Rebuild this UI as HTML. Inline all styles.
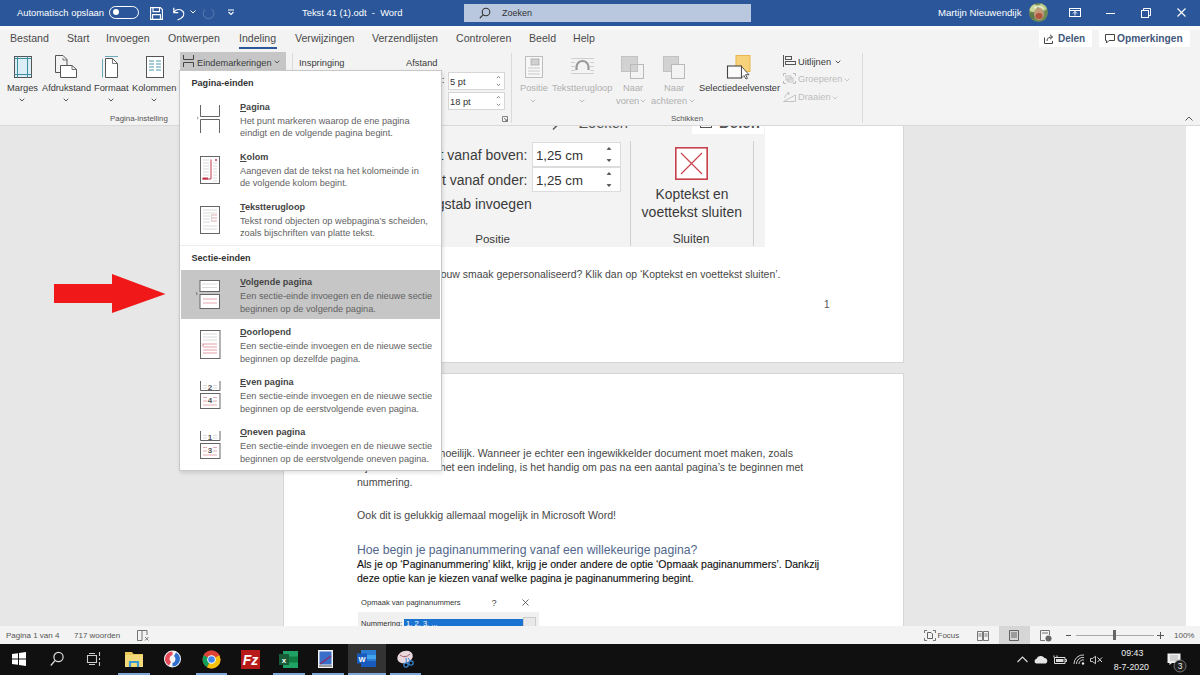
<!DOCTYPE html>
<html><head><meta charset="utf-8">
<style>
*{margin:0;padding:0;box-sizing:border-box}
html,body{width:1200px;height:675px;overflow:hidden;background:#e7e7e7;font-family:"Liberation Sans",sans-serif;color:#333}
.a{position:absolute}
.t{position:absolute;white-space:nowrap;line-height:1}
svg{position:absolute;overflow:visible}
</style></head><body>
<div class="a" style="left:0;top:0;width:1200px;height:26px;background:#2b579a">
<div class="t" style="left:17.00px;top:8px;font-size:9.4px;color:#fff;">Automatisch opslaan</div>
<div class="a" style="left:109px;top:6px;width:30px;height:13px;border:1.2px solid #fff;border-radius:7px"></div>
<div class="a" style="left:113px;top:9px;width:6px;height:6px;background:#fff;border-radius:50%"></div>
<svg style="left:150px;top:7px;" width="13" height="13" viewBox="0 0 13 13"><path d="M0.6 0.6H10.4L12.4 2.6V12.4H0.6Z M3 0.6V4.6H9.5V0.6 M2.6 12.4V7.6H10.4V12.4" fill="none" stroke="#fff" stroke-width="1.1"/></svg>
<svg style="left:172px;top:7px;" width="14" height="14" viewBox="0 0 14 14"><path d="M1.8 5.2C4 2 8.5 1.5 11 4.5C13 7 12 10.5 5.5 13" fill="none" stroke="#fff" stroke-width="1.2"/><path d="M1.8 0.8V5.6H6.3" fill="none" stroke="#fff" stroke-width="1.2"/></svg>
<svg style="left:190px;top:10px;" width="6" height="4" viewBox="0 0 6 4"><path d="M0.5 0.5L3 3L5.5 0.5" fill="none" stroke="#fff" stroke-width="1"/></svg>
<svg style="left:202px;top:7px;" width="13" height="13" viewBox="0 0 13 13"><path d="M3 2.5A5.3 5.3 0 1 0 9.5 2" fill="none" stroke="#4e72ad" stroke-width="1.2"/></svg>
<svg style="left:227px;top:9px;" width="8" height="8" viewBox="0 0 8 8"><path d="M1 1H7 M1.5 3L4 5.5L6.5 3" fill="none" stroke="#fff" stroke-width="1.1"/></svg>
<div class="t" style="left:302.00px;top:8px;font-size:9.4px;color:#fff;">Tekst 41 (1).odt&nbsp; - &nbsp;Word</div>
<div class="a" style="left:464px;top:4px;width:287px;height:17.5px;background:#b9c7df"></div>
<svg style="left:479px;top:7px;" width="12" height="12" viewBox="0 0 12 12"><circle cx="7" cy="5" r="3.8" fill="none" stroke="#333" stroke-width="1.1"/><path d="M4.3 7.7L0.8 11.2" stroke="#333" stroke-width="1.2"/></svg>
<div class="t" style="left:502.00px;top:9px;font-size:9px;color:#333;">Zoeken</div>
<div class="t" style="left:938.00px;top:8px;font-size:9.65px;color:#fff;">Martijn Nieuwendijk</div>
<svg style="left:1029px;top:3px;" width="19" height="19" viewBox="0 0 19 19"><defs><clipPath id="av"><circle cx="9.5" cy="9.5" r="9.5"/></clipPath></defs><g clip-path="url(#av)"><rect width="19" height="19" fill="#6f8a55"/><circle cx="4" cy="5" r="4" fill="#c9d79a"/><circle cx="14" cy="4" r="4" fill="#b6c98a"/><circle cx="3" cy="13" r="3" fill="#5e7a4a"/><ellipse cx="10" cy="11" rx="5" ry="6" fill="#c49a7a"/><ellipse cx="10" cy="13" rx="3.5" ry="3" fill="#b0553f"/><path d="M5 5Q10 1 15 6" fill="none" stroke="#e8e8c8" stroke-width="2"/></g></svg>
<svg style="left:1069px;top:8px;" width="12" height="9" viewBox="0 0 12 9"><rect x="0.5" y="0.5" width="11" height="8" fill="none" stroke="#fff" stroke-width="1"/><path d="M0.5 2.5H11.5 M6 3.5V7.5 M4 5.5L6 3.5L8 5.5" fill="none" stroke="#fff" stroke-width="1"/></svg>
<div class="a" style="left:1106px;top:13px;width:9px;height:1px;background:#fff"></div>
<svg style="left:1141px;top:8px;" width="10" height="10" viewBox="0 0 10 10"><rect x="0.5" y="2.5" width="7" height="7" fill="none" stroke="#fff" stroke-width="1"/><path d="M2.5 2.5V0.5H9.5V7.5H7.5" fill="none" stroke="#fff" stroke-width="1"/></svg>
<svg style="left:1177px;top:8px;" width="9" height="9" viewBox="0 0 9 9"><path d="M0.5 0.5L8.5 8.5M8.5 0.5L0.5 8.5" stroke="#fff" stroke-width="1.1"/></svg>
</div>
<div class="a" style="left:0;top:26px;width:1200px;height:24px;background:linear-gradient(#fafafa 0,#fafafa 3px,#f3f3f3 5px)">
<div class="t" style="left:10.00px;top:7px;font-size:10.6px;color:#4a4a4a;">Bestand</div>
<div class="t" style="left:67.00px;top:7px;font-size:10.6px;color:#4a4a4a;">Start</div>
<div class="t" style="left:106.00px;top:7px;font-size:10.6px;color:#4a4a4a;">Invoegen</div>
<div class="t" style="left:168.00px;top:7px;font-size:10.6px;color:#4a4a4a;">Ontwerpen</div>
<div class="t" style="left:239.00px;top:7px;font-size:10.6px;color:#4a4a4a;">Indeling</div>
<div class="t" style="left:295.00px;top:7px;font-size:10.6px;color:#4a4a4a;">Verwijzingen</div>
<div class="t" style="left:372.00px;top:7px;font-size:10.6px;color:#4a4a4a;">Verzendlijsten</div>
<div class="t" style="left:456.00px;top:7px;font-size:10.6px;color:#4a4a4a;">Controleren</div>
<div class="t" style="left:529.00px;top:7px;font-size:10.6px;color:#4a4a4a;">Beeld</div>
<div class="t" style="left:573.00px;top:7px;font-size:10.6px;color:#4a4a4a;">Help</div>
<div class="a" style="left:239px;top:21px;width:38px;height:2px;background:#2b579a"></div>
<div class="a" style="left:1039px;top:4px;width:53px;height:17px;background:#fff"></div>
<svg style="left:1044px;top:8px;" width="11" height="10" viewBox="0 0 11 10"><path d="M0.5 3.5V9.5H8.5V7 M3 7C3 4 5 3 8 3 M6 0.8L8.7 3L6 5.2" fill="none" stroke="#444" stroke-width="1"/></svg>
<div class="t" style="left:1058.00px;top:8px;font-size:10px;color:#43587a;font-weight:bold">Delen</div>
<div class="a" style="left:1099px;top:4px;width:91px;height:17px;background:#fff"></div>
<svg style="left:1105px;top:8px;" width="10" height="10" viewBox="0 0 10 10"><path d="M0.5 0.5H9.5V6.5H4L1.5 9V6.5H0.5Z" fill="none" stroke="#444" stroke-width="1"/></svg>
<div class="t" style="left:1117.00px;top:8px;font-size:10.2px;color:#43587a;font-weight:bold">Opmerkingen</div>
</div>
<div class="a" style="left:0;top:50px;width:1200px;height:76px;background:#f3f3f3">
<div class="a" style="left:0px;top:75px;width:1200px;height:1px;background:#d8d8d8"></div>
<svg style="left:14px;top:6px;" width="18" height="22" viewBox="0 0 18 22"><rect x="0.5" y="0.5" width="17" height="21" fill="#dbeef5" stroke="#555" stroke-width="1"/><path d="M3.5 0.5V21.5 M13.5 0.5V21.5 M0.5 2.5H17.5 M0.5 18.5H17.5" stroke="#3c8ea0" stroke-width="1"/></svg>
<div class="t" style="left:7.00px;top:34px;font-size:9.3px;color:#3a3a3a;">Marges</div>
<svg style="left:19px;top:47.5px;" width="6" height="4" viewBox="0 0 6 4"><path d="M0.7 0.7L3 3L5.3 0.7" fill="none" stroke="#555" stroke-width="1"/></svg>
<svg style="left:55px;top:5px;" width="23" height="23" viewBox="0 0 23 23"><path d="M0.5 0.5H8L12 4.5V10 M0.5 0.5V17.5H5" fill="none" stroke="#555" stroke-width="1"/><path d="M8 3V5H12" fill="none" stroke="#555" stroke-width="0.8"/><path d="M5.5 10.5H17L21.5 14.5V22.5H5.5Z" fill="#fff" stroke="#555" stroke-width="1"/><path d="M17 10.5V14.5H21.5" fill="none" stroke="#555" stroke-width="0.8"/></svg>
<div class="t" style="left:42.00px;top:34px;font-size:9.2px;color:#3a3a3a;">Afdrukstand</div>
<svg style="left:63px;top:47.5px;" width="6" height="4" viewBox="0 0 6 4"><path d="M0.7 0.7L3 3L5.3 0.7" fill="none" stroke="#555" stroke-width="1"/></svg>
<svg style="left:101px;top:6px;" width="18" height="22" viewBox="0 0 18 22"><path d="M4.5 2.5H11.5L16.5 7.5V21.5H4.5Z" fill="#fff" stroke="#555" stroke-width="1"/><path d="M11.5 2.5V7.5H16.5" fill="none" stroke="#555" stroke-width="0.8"/><path d="M4 0.5H17 M1.5 3V21.5" stroke="#6aa9b8" stroke-width="1"/></svg>
<div class="t" style="left:94.00px;top:34px;font-size:9.3px;color:#3a3a3a;">Formaat</div>
<svg style="left:108px;top:47.5px;" width="6" height="4" viewBox="0 0 6 4"><path d="M0.7 0.7L3 3L5.3 0.7" fill="none" stroke="#555" stroke-width="1"/></svg>
<svg style="left:146px;top:6px;" width="18" height="22" viewBox="0 0 18 22"><rect x="0.5" y="0.5" width="17" height="21" fill="#fff" stroke="#555" stroke-width="1"/><path d="M3 5H8 M10 5H15 M3 8H8 M10 8H15 M3 11H8 M10 11H15 M3 14H8 M10 14H15" stroke="#4a9ab0" stroke-width="1"/></svg>
<div class="t" style="left:132.00px;top:34px;font-size:9.3px;color:#3a3a3a;">Kolommen</div>
<svg style="left:151px;top:47.5px;" width="6" height="4" viewBox="0 0 6 4"><path d="M0.7 0.7L3 3L5.3 0.7" fill="none" stroke="#555" stroke-width="1"/></svg>
<div class="t" style="left:110.00px;top:65px;font-size:7.9px;color:#555;">Pagina-instelling</div>
<div class="a" style="left:180px;top:2px;width:106px;height:19px;background:#c6c6c6"></div>
<svg style="left:183px;top:5px;" width="11" height="12" viewBox="0 0 11 12"><path d="M0.5 0V4.5H10.5V0 M0.5 12V7.5H10.5V12" fill="none" stroke="#444" stroke-width="1"/></svg>
<div class="t" style="left:197.00px;top:9px;font-size:9.2px;color:#3a3a3a;">Eindemarkeringen</div>
<svg style="left:274px;top:9.5px;" width="6" height="4" viewBox="0 0 6 4"><path d="M0.7 0.7L3 3L5.3 0.7" fill="none" stroke="#555" stroke-width="1"/></svg>
<div class="a" style="left:292px;top:3px;width:1px;height:70px;background:#dadada"></div>
<div class="t" style="left:299.00px;top:9px;font-size:9.3px;color:#3a3a3a;">Inspringing</div>
<div class="t" style="left:406.00px;top:9px;font-size:9.3px;color:#3a3a3a;">Afstand</div>
<div class="t" style="left:442.00px;top:26px;font-size:9.3px;color:#3a3a3a;">:</div>
<div class="a" style="left:448px;top:22px;width:57px;height:18px;background:#fff;border:1px solid #d6d6d6"></div>
<div class="t" style="left:450.00px;top:28px;font-size:9.3px;color:#333;">5 pt</div>
<svg style="left:496px;top:25px;" width="5" height="12" viewBox="0 0 5 12"><path d="M0.8 3L2.5 1.5L4.2 3 M0.8 9L2.5 10.5L4.2 9" fill="none" stroke="#777" stroke-width="0.9"/></svg>
<div class="a" style="left:448px;top:42px;width:57px;height:18px;background:#fff;border:1px solid #d6d6d6"></div>
<div class="t" style="left:450.00px;top:48px;font-size:9.3px;color:#333;">18 pt</div>
<svg style="left:496px;top:45px;" width="5" height="12" viewBox="0 0 5 12"><path d="M0.8 3L2.5 1.5L4.2 3 M0.8 9L2.5 10.5L4.2 9" fill="none" stroke="#777" stroke-width="0.9"/></svg>
<svg style="left:502px;top:66px;" width="6" height="6" viewBox="0 0 6 6"><path d="M0.5 5.5V0.5H5.5V5.5Z M2 2L5 5 M5 3V5H3" fill="none" stroke="#666" stroke-width="0.8"/></svg>
<div class="a" style="left:511px;top:3px;width:1px;height:70px;background:#dadada"></div>
<svg style="left:525px;top:6px;" width="18" height="22" viewBox="0 0 18 22"><rect x="0.5" y="0.5" width="17" height="21" fill="#f7f7f7" stroke="#bdbdbd" stroke-width="1"/><rect x="6" y="3" width="8" height="6" fill="#d0d0d0" stroke="#aaa" stroke-width="0.8"/><path d="M3 12H15 M3 15H15 M3 18H15" stroke="#c8c8c8" stroke-width="1"/></svg>
<div class="t" style="left:520.00px;top:34px;font-size:9.3px;color:#b0b0b0;">Positie</div>
<svg style="left:530px;top:48.5px;" width="6" height="4" viewBox="0 0 6 4"><path d="M0.7 0.7L3 3L5.3 0.7" fill="none" stroke="#bbb" stroke-width="1"/></svg>
<svg style="left:571px;top:7px;" width="23" height="18" viewBox="0 0 23 18"><path d="M0 1.5H23 M0 5.5H4 M19 5.5H23 M0 9.5H4 M19 9.5H23 M0 13.5H4 M19 13.5H23 M0 16.5H23" stroke="#cfcfcf" stroke-width="1"/><path d="M5.5 13V10A6 6 0 0 1 17.5 10V13" fill="none" stroke="#999" stroke-width="2.2"/></svg>
<div class="t" style="left:552.00px;top:34px;font-size:9.3px;color:#b0b0b0;">Tekstterugloop</div>
<svg style="left:579px;top:48.5px;" width="6" height="4" viewBox="0 0 6 4"><path d="M0.7 0.7L3 3L5.3 0.7" fill="none" stroke="#bbb" stroke-width="1"/></svg>
<svg style="left:621px;top:6px;" width="23" height="23" viewBox="0 0 23 23"><rect x="0.5" y="0.5" width="16" height="15" fill="#d2d2d2" stroke="#c2c2c2"/><rect x="9.5" y="8.5" width="13" height="14" fill="none" stroke="#b8b8b8"/></svg>
<div class="t" style="left:623.00px;top:34px;font-size:9.3px;color:#b0b0b0;">Naar</div>
<div class="t" style="left:616.00px;top:47px;font-size:9.3px;color:#b0b0b0;">voren</div>
<svg style="left:640px;top:48.5px;" width="6" height="4" viewBox="0 0 6 4"><path d="M0.7 0.7L3 3L5.3 0.7" fill="none" stroke="#bbb" stroke-width="1"/></svg>
<svg style="left:663px;top:6px;" width="23" height="23" viewBox="0 0 23 23"><rect x="0.5" y="0.5" width="15" height="15" fill="#d2d2d2" stroke="#c2c2c2"/><rect x="8.5" y="8.5" width="13" height="14" fill="#f3f3f3" stroke="#b8b8b8"/></svg>
<div class="t" style="left:664.00px;top:34px;font-size:9.3px;color:#b0b0b0;">Naar</div>
<div class="t" style="left:651.00px;top:47px;font-size:9.3px;color:#b0b0b0;">achteren</div>
<svg style="left:689px;top:48.5px;" width="6" height="4" viewBox="0 0 6 4"><path d="M0.7 0.7L3 3L5.3 0.7" fill="none" stroke="#bbb" stroke-width="1"/></svg>
<svg style="left:727px;top:5px;" width="24" height="25" viewBox="0 0 24 25"><rect x="9" y="0.5" width="14" height="16" fill="#f8d27a" stroke="#e8b64e" stroke-width="1"/><rect x="0.5" y="11" width="14" height="12" fill="#fafafa" stroke="#444" stroke-width="1.1"/><path d="M14.5 11.5V23L17 20.5L19 24L20.5 23.3L18.6 19.7H22Z" fill="#fff" stroke="#444" stroke-width="0.9"/></svg>
<div class="t" style="left:699.00px;top:34px;font-size:9.3px;color:#3a3a3a;">Selectiedeelvenster</div>
<svg style="left:783px;top:5px;" width="13" height="12" viewBox="0 0 13 12"><path d="M0.5 0V12" stroke="#555" stroke-width="1"/><rect x="2.5" y="1.5" width="6" height="3" fill="none" stroke="#555"/><rect x="2.5" y="6.5" width="10" height="3" fill="none" stroke="#555"/></svg>
<div class="t" style="left:798.00px;top:8px;font-size:9.3px;color:#3a3a3a;">Uitlijnen</div>
<svg style="left:835px;top:9.5px;" width="6" height="4" viewBox="0 0 6 4"><path d="M0.7 0.7L3 3L5.3 0.7" fill="none" stroke="#555" stroke-width="1"/></svg>
<svg style="left:783px;top:23px;" width="13" height="11" viewBox="0 0 13 11"><path d="M0.5 0.5H3 M10 0.5H12.5 M0.5 10.5H3 M10 10.5H12.5 M0.5 0.5V3 M12.5 0.5V3 M0.5 8V10.5 M12.5 8V10.5" stroke="#bbb"/><rect x="3" y="3" width="5" height="4" fill="none" stroke="#c4c4c4"/><rect x="5" y="5" width="5" height="4" fill="none" stroke="#c4c4c4"/></svg>
<div class="t" style="left:798.00px;top:25px;font-size:9.3px;color:#bdbdbd;">Groeperen</div>
<svg style="left:844px;top:27.5px;" width="6" height="4" viewBox="0 0 6 4"><path d="M0.7 0.7L3 3L5.3 0.7" fill="none" stroke="#c8c8c8" stroke-width="1"/></svg>
<svg style="left:783px;top:42px;" width="13" height="10" viewBox="0 0 13 10"><path d="M0.5 9.5H12.5L12.5 3Z" fill="none" stroke="#c4c4c4"/><path d="M2 6A5 5 0 0 1 6 1 M4.5 0L6.5 1L5 3" fill="none" stroke="#c4c4c4"/></svg>
<div class="t" style="left:798.00px;top:43px;font-size:9.3px;color:#bdbdbd;">Draaien</div>
<svg style="left:832px;top:45.5px;" width="6" height="4" viewBox="0 0 6 4"><path d="M0.7 0.7L3 3L5.3 0.7" fill="none" stroke="#c8c8c8" stroke-width="1"/></svg>
<div class="t" style="left:671.00px;top:65px;font-size:7.9px;color:#555;">Schikken</div>
<div class="a" style="left:862px;top:3px;width:1px;height:70px;background:#dadada"></div>
<svg style="left:1185px;top:66px;" width="8" height="5" viewBox="0 0 8 5"><path d="M0.5 4.5L4 1L7.5 4.5" fill="none" stroke="#555" stroke-width="1"/></svg>
</div>
<div class="a" style="left:0;top:126px;width:1200px;height:500px;background:#e7e7e7;overflow:hidden">
<div class="a" style="left:1186px;top:0px;width:14px;height:500px;background:#fff"></div>
<div class="a" style="left:283px;top:-16px;width:621px;height:253px;background:#fff;border:1px solid #d6d6d6"></div>
<div class="a" style="left:283px;top:247px;width:621px;height:400px;background:#fff;border:1px solid #d6d6d6"></div>
<div class="a" style="left:420px;top:-16px;width:345px;height:137px;background:#f3f3f3"></div>
<div class="a" style="left:692px;top:-16px;width:72px;height:24px;background:#fff"></div>
<svg style="left:552px;top:-8px;" width="9" height="12" viewBox="0 0 9 12"><path d="M1 11.5L7.5 5" stroke="#555" stroke-width="1.4"/></svg>
<div class="t" style="left:579.00px;top:-10px;font-size:14.7px;color:#555;">Zoeken</div>
<div class="a" style="left:700px;top:-10px;width:12px;height:12px;border:1.3px solid #555"></div>
<div class="t" style="left:719.00px;top:-11px;font-size:15px;color:#555;font-weight:bold">Delen</div>
<div class="t" style="right:672.50px;top:22px;font-size:14px;color:#3a3a3a;">t vanaf boven:</div>
<div class="t" style="right:672.50px;top:47px;font-size:14px;color:#3a3a3a;">t vanaf onder:</div>
<div class="t" style="right:668.30px;top:71px;font-size:14px;color:#3a3a3a;">Beletter-gstab invoegen</div>
<div class="a" style="left:531.5px;top:15.5px;width:89px;height:25px;background:#fff;border:1px solid #dcdcdc"></div>
<div class="t" style="left:536.00px;top:23px;font-size:13.2px;color:#333;">1,25 cm</div>
<svg style="left:606px;top:19.5px;" width="6" height="17" viewBox="0 0 6 17"><path d="M1.2 3.5L3 1.5L4.8 3.5Z M1.2 13.5L3 15.5L4.8 13.5Z" fill="#444" stroke="#444" stroke-width="0.7"/></svg>
<div class="a" style="left:531.5px;top:40.5px;width:89px;height:25px;background:#fff;border:1px solid #dcdcdc"></div>
<div class="t" style="left:536.00px;top:48px;font-size:13.2px;color:#333;">1,25 cm</div>
<svg style="left:606px;top:44.5px;" width="6" height="17" viewBox="0 0 6 17"><path d="M1.2 3.5L3 1.5L4.8 3.5Z M1.2 13.5L3 15.5L4.8 13.5Z" fill="#444" stroke="#444" stroke-width="0.7"/></svg>
<div class="t" style="left:475.20px;top:107px;font-size:11.6px;color:#3a3a3a;">Positie</div>
<div class="a" style="left:629.5px;top:15px;width:1px;height:105px;background:#d0d0d0"></div>
<div class="a" style="left:752.5px;top:15px;width:1px;height:105px;background:#d0d0d0"></div>
<svg style="left:675px;top:20.5px;" width="33" height="33" viewBox="0 0 33 33"><rect x="0.8" y="0.8" width="31.4" height="31.4" fill="#fff" stroke="#c8404a" stroke-width="1.6"/><path d="M6 6L27 27M27 6L6 27" stroke="#c8404a" stroke-width="1.1"/></svg>
<div class="t" style="left:655.60px;top:62px;font-size:13.8px;color:#3a3a3a;">Koptekst en</div>
<div class="t" style="left:641.60px;top:79px;font-size:14px;color:#3a3a3a;">voettekst sluiten</div>
<div class="t" style="left:672.70px;top:107px;font-size:12px;color:#3a3a3a;">Sluiten</div>
<div class="t" style="right:420.00px;top:143px;font-size:10.6px;color:#474747;transform:scaleX(0.986);transform-origin:100% 0">Is de koptekst of voettekst naar jouw smaak gepersonaliseerd? Klik dan op ‘Koptekst en voettekst sluiten’.</div>
<div class="t" style="left:824.00px;top:174px;font-size:10px;color:#555;">1</div>
<div class="t" style="right:407.00px;top:322px;font-size:10.6px;color:#474747;">Het invoegen van paginanummers is niet moeilijk. Wanneer je echter een ingewikkelder document moet maken, zoals</div>
<div class="t" style="left:357.00px;top:336px;font-size:10.6px;color:#474747;transform:scaleX(0.9909);transform-origin:0 0">bijvoorbeeld een met een indeling, is het handig om pas na een aantal pagina’s te beginnen met</div>
<div class="t" style="left:357.00px;top:351px;font-size:10.6px;color:#474747;transform:scaleX(0.9928);transform-origin:0 0">nummering.</div>
<div class="t" style="left:357.00px;top:384px;font-size:10.6px;color:#474747;transform:scaleX(1.0031);transform-origin:0 0">Ook dit is gelukkig allemaal mogelijk in Microsoft Word!</div>
<div class="t" style="left:357.00px;top:418px;font-size:12.2px;color:#52678c;transform:scaleX(1.0003);transform-origin:0 0">Hoe begin je paginanummering vanaf een willekeurige pagina?</div>
<div class="t" style="left:357.00px;top:433px;font-size:10.6px;color:#111;-webkit-text-stroke:0.12px #111;transform:scaleX(0.9931);transform-origin:0 0">Als je op ‘Paginanummering’ klikt, krijg je onder andere de optie ‘Opmaak paginanummers’. Dankzij</div>
<div class="t" style="left:357.00px;top:447px;font-size:10.6px;color:#111;-webkit-text-stroke:0.12px #111;transform:scaleX(0.9871);transform-origin:0 0">deze optie kan je kiezen vanaf welke pagina je paginanummering begint.</div>
<div class="t" style="left:361.00px;top:473px;font-size:7.6px;color:#333;">Opmaak van paginanummers</div>
<div class="t" style="left:491.50px;top:473px;font-size:9.2px;color:#444;">?</div>
<svg style="left:522px;top:473px;" width="7" height="7" viewBox="0 0 7 7"><path d="M0.5 0.5L6.5 6.5M6.5 0.5L0.5 6.5" stroke="#555" stroke-width="0.9"/></svg>
<div class="a" style="left:358px;top:486px;width:181px;height:20px;background:#f0f0f0"></div>
<div class="t" style="left:361.00px;top:494px;font-size:7.6px;color:#333;">Nummering:</div>
<div class="a" style="left:404px;top:493px;width:120px;height:10px;background:#1a73d0"></div>
<div class="t" style="left:406.00px;top:494px;font-size:7.6px;color:#fff;">1, 2, 3, ...</div>
<div class="a" style="left:523px;top:491px;width:13px;height:12px;background:#e8e8e8;border:1px solid #ccc"></div>
<svg style="left:54px;top:148px;" width="112" height="40" viewBox="0 0 112 40"><path d="M0 10H58V0L111.5 20L58 39V29H0Z" fill="#f01818"/></svg>
</div>
<div class="a" style="left:179px;top:70px;width:263px;height:401px;background:#fff;border:1px solid #c8c8c8;box-shadow:1px 2px 4px rgba(0,0,0,0.12)">
<div class="t" style="left:11.50px;top:8px;font-size:9.1px;color:#333;font-weight:bold">Pagina-einden</div>
<div class="t" style="left:11.50px;top:183px;font-size:9.1px;color:#333;font-weight:bold">Sectie-einden</div>
<div class="a" style="left:0px;top:174px;width:261px;height:1px;background:#ececec"></div>
<div class="a" style="left:1px;top:199px;width:259px;height:49px;background:#c6c6c6"></div>
<div class="t" style="left:60.00px;top:32px;font-size:9.1px;color:#444;font-weight:bold"><span style="text-decoration:underline">P</span>agina</div>
<div class="t" style="left:60.00px;top:46px;font-size:9.2px;color:#626262;">Het punt markeren waarop de ene pagina</div>
<div class="t" style="left:60.00px;top:58px;font-size:9.2px;color:#626262;">eindigt en de volgende pagina begint.</div>
<div class="t" style="left:60.00px;top:82px;font-size:9.1px;color:#444;font-weight:bold"><span style="text-decoration:underline">K</span>olom</div>
<div class="t" style="left:60.00px;top:96px;font-size:9.2px;color:#626262;">Aangeven dat de tekst na het kolomeinde in</div>
<div class="t" style="left:60.00px;top:108px;font-size:9.2px;color:#626262;">de volgende kolom begint.</div>
<div class="t" style="left:60.00px;top:132px;font-size:9.1px;color:#444;font-weight:bold"><span style="text-decoration:underline">T</span>ekstterugloop</div>
<div class="t" style="left:60.00px;top:146px;font-size:9.2px;color:#626262;">Tekst rond objecten op webpagina’s scheiden,</div>
<div class="t" style="left:60.00px;top:158px;font-size:9.2px;color:#626262;">zoals bijschriften van platte tekst.</div>
<div class="t" style="left:60.00px;top:207px;font-size:9.1px;color:#444;font-weight:bold"><span style="text-decoration:underline">V</span>olgende pagina</div>
<div class="t" style="left:60.00px;top:221px;font-size:9.2px;color:#626262;">Een sectie-einde invoegen en de nieuwe sectie</div>
<div class="t" style="left:60.00px;top:234px;font-size:9.2px;color:#626262;">beginnen op de volgende pagina.</div>
<div class="t" style="left:60.00px;top:257px;font-size:9.1px;color:#444;font-weight:bold"><span style="text-decoration:underline">D</span>oorlopend</div>
<div class="t" style="left:60.00px;top:271px;font-size:9.2px;color:#626262;">Een sectie-einde invoegen en de nieuwe sectie</div>
<div class="t" style="left:60.00px;top:284px;font-size:9.2px;color:#626262;">beginnen op dezelfde pagina.</div>
<div class="t" style="left:60.00px;top:307px;font-size:9.1px;color:#444;font-weight:bold"><span style="text-decoration:underline">E</span>ven pagina</div>
<div class="t" style="left:60.00px;top:321px;font-size:9.2px;color:#626262;">Een sectie-einde invoegen en de nieuwe sectie</div>
<div class="t" style="left:60.00px;top:334px;font-size:9.2px;color:#626262;">beginnen op de eerstvolgende even pagina.</div>
<div class="t" style="left:60.00px;top:357px;font-size:9.1px;color:#444;font-weight:bold"><span style="text-decoration:underline">O</span>neven pagina</div>
<div class="t" style="left:60.00px;top:371px;font-size:9.2px;color:#626262;">Een sectie-einde invoegen en de nieuwe sectie</div>
<div class="t" style="left:60.00px;top:384px;font-size:9.2px;color:#626262;">beginnen op de eerstvolgende oneven pagina.</div>
<svg style="left:16px;top:34px;" width="25" height="29" viewBox="0 0 25 29"><path d="M4.5 0V11.5H23.5V0 M4.5 28V14.5H23.5V28" fill="none" stroke="#666" stroke-width="1"/><path d="M1 11L2.5 13L1 15Z" fill="#aaa"/></svg>
<svg style="left:20px;top:85px;" width="21" height="28" viewBox="0 0 21 28"><rect x="0.5" y="0.5" width="19" height="27" fill="#fff" stroke="#666"/><path d="M3 4H9 M3 7H9 M3 10H9 M3 13H9 M3 16H9 M3 19H9 M13 7H17 M13 10H17 M13 13H17 M13 16H17 M13 19H17 M13 22H17 M13 25H17" stroke="#d0d0d0" stroke-width="0.8"/><path d="M11 3.5V23H2.5" fill="none" stroke="#c0394a" stroke-width="1"/><path d="M2.5 22.5H8" stroke="#c0394a" stroke-width="2"/><circle cx="16" cy="4" r="1" fill="#c0394a"/></svg>
<svg style="left:20px;top:135px;" width="21" height="28" viewBox="0 0 21 28"><rect x="0.5" y="0.5" width="19" height="27" fill="#fff" stroke="#666"/><path d="M3 4H17 M3 7H17 M3 10H10 M3 13H10 M3 16H10 M3 20H17 M3 23H17" stroke="#d0d0d0" stroke-width="0.8"/><path d="M12 9H17 M12 12H17 M12 15H17" stroke="#e3a0a8" stroke-width="0.9"/><path d="M11.5 8V16" stroke="#bbb" stroke-width="0.6"/></svg>
<svg style="left:15px;top:209px;" width="26" height="30" viewBox="0 0 26 30"><rect x="5" y="0.5" width="19.5" height="11" fill="#fff" stroke="#666"/><path d="M7 4H22 M7 7.5H22" stroke="#d0d0d0" stroke-width="0.8"/><rect x="5" y="14.5" width="19.5" height="14" fill="#fff" stroke="#666"/><path d="M8 19H22 M8 23H22" stroke="#e3a0a8" stroke-width="0.9"/><path d="M1 11.5L3 13.5L1 15.5Z" fill="#888"/></svg>
<svg style="left:20px;top:259px;" width="21" height="29" viewBox="0 0 21 29"><rect x="0.5" y="0.5" width="19.5" height="28" fill="#fff" stroke="#666"/><path d="M3 4H17 M3 7H17 M3 10H17" stroke="#d0d0d0" stroke-width="0.8"/><path d="M3 14H17 M3 17H17 M3 20H17 M3 23H17" stroke="#e3a0a8" stroke-width="1"/><path d="M2 13.5L3.5 15L2 16.5" fill="none" stroke="#c0394a" stroke-width="0.6"/></svg>
<svg style="left:20px;top:310px;" width="21" height="28" viewBox="0 0 21 28"><path d="M0.5 0V9.5H20V0" fill="none" stroke="#666"/><path d="M3 4.5H7 M13 4.5H17 M3 7H7 M13 7H17" stroke="#d0d0d0" stroke-width="0.8"/><text x="10" y="8.5" font-size="8" font-family="Liberation Sans" fill="#555" font-weight="bold" text-anchor="middle">2</text><rect x="0.5" y="12.5" width="19.5" height="15" fill="#fff" stroke="#666"/><path d="M3 16.5H7 M13 16.5H17 M3 20H7 M13 20H17 M3 24H17" stroke="#e3a0a8" stroke-width="0.9"/><text x="10" y="22" font-size="8" font-family="Liberation Sans" fill="#555" font-weight="bold" text-anchor="middle">4</text></svg>
<svg style="left:20px;top:360px;" width="21" height="28" viewBox="0 0 21 28"><path d="M0.5 0V9.5H20V0" fill="none" stroke="#666"/><path d="M3 4.5H7 M13 4.5H17 M3 7H7 M13 7H17" stroke="#d0d0d0" stroke-width="0.8"/><text x="10" y="8.5" font-size="8" font-family="Liberation Sans" fill="#555" font-weight="bold" text-anchor="middle">1</text><rect x="0.5" y="12.5" width="19.5" height="15" fill="#fff" stroke="#666"/><path d="M3 16.5H7 M13 16.5H17 M3 20H7 M13 20H17 M3 24H17" stroke="#e3a0a8" stroke-width="0.9"/><text x="10" y="22" font-size="8" font-family="Liberation Sans" fill="#555" font-weight="bold" text-anchor="middle">3</text></svg>
</div>
<div class="a" style="left:0;top:626px;width:1200px;height:18px;background:#f3f3f3">
<div class="t" style="left:6.00px;top:6px;font-size:8px;color:#555;">Pagina 1 van 4</div>
<div class="t" style="left:74.00px;top:6px;font-size:8px;color:#555;">717 woorden</div>
<svg style="left:137px;top:4px;" width="12" height="11" viewBox="0 0 12 11"><path d="M0.5 0.5H5V10.5H0.5Z M5 0.5H10V5 M8 7L11.5 10.5 M11.5 7L8 10.5" fill="none" stroke="#666" stroke-width="0.9"/></svg>
<svg style="left:924px;top:4px;" width="12" height="11" viewBox="0 0 12 11"><path d="M0.5 3V0.5H3 M9 0.5H11.5V3 M0.5 8V10.5H3 M9 10.5H11.5V8" fill="none" stroke="#666" stroke-width="0.9"/><path d="M3.5 2.5H7L8.5 4V8.5H3.5Z" fill="none" stroke="#555" stroke-width="0.9"/></svg>
<div class="t" style="left:937.50px;top:6px;font-size:8px;color:#555;">Focus</div>
<svg style="left:977px;top:5px;" width="12" height="10" viewBox="0 0 12 10"><path d="M0.5 0.5H5.5V9.5H0.5Z M6.5 0.5H11.5V9.5H6.5Z M1.5 3H4.5 M1.5 5H4.5 M7.5 3H10.5 M7.5 5H10.5" fill="none" stroke="#666" stroke-width="0.9"/></svg>
<div class="a" style="left:999px;top:0px;width:31px;height:18px;background:#d6d6d6"></div>
<svg style="left:1009px;top:4px;" width="10" height="11" viewBox="0 0 10 11"><path d="M0.5 0.5H9.5V10.5H0.5Z M2 3H8 M2 5H8 M2 7H8" fill="none" stroke="#555" stroke-width="0.9"/></svg>
<svg style="left:1040px;top:4px;" width="12" height="12" viewBox="0 0 12 12"><path d="M0.5 0.5H9.5V5 M0.5 0.5V10.5H5 M2 3H8" fill="none" stroke="#666" stroke-width="0.9"/><circle cx="8.5" cy="8.5" r="3" fill="#666"/></svg>
<div class="a" style="left:1066px;top:9px;width:5px;height:1px;background:#555"></div>
<div class="a" style="left:1076px;top:9px;width:78px;height:1px;background:#aaa"></div>
<div class="a" style="left:1113px;top:4px;width:3px;height:10px;background:#666"></div>
<svg style="left:1157px;top:6px;" width="7" height="7" viewBox="0 0 7 7"><path d="M0 3.5H7 M3.5 0V7" stroke="#555" stroke-width="1"/></svg>
<div class="t" style="left:1174.00px;top:6px;font-size:8px;color:#555;">100%</div>
</div>
<div class="a" style="left:0;top:644px;width:1200px;height:31px;background:#101010">
<svg style="left:12px;top:8px;" width="14" height="14" viewBox="0 0 14 14"><path d="M0 2L6 1.2V6.5H0Z M7 1L14 0V6.5H7Z M0 7.5H6V12.8L0 12Z M7 7.5H14V14L7 13Z" fill="#fff"/></svg>
<svg style="left:50px;top:7px;" width="14" height="16" viewBox="0 0 14 16"><circle cx="8.5" cy="6" r="4.6" fill="none" stroke="#ddd" stroke-width="1.2"/><path d="M5.2 9.3L0.8 14.5" stroke="#ddd" stroke-width="1.3"/></svg>
<svg style="left:87px;top:8px;" width="14" height="14" viewBox="0 0 14 14"><path d="M0.5 3.5H9.5V10.5H0.5Z M2 1.5H8 M2 12.5H8 M12.5 0V4 M12.5 6V8 M12.5 10V14" fill="none" stroke="#ccc" stroke-width="1.1"/></svg>
<div class="a" style="left:118px;top:29px;width:32px;height:2px;background:#7ea6d6"></div>
<div class="a" style="left:196px;top:29px;width:31px;height:2px;background:#7ea6d6"></div>
<div class="a" style="left:273px;top:29px;width:32px;height:2px;background:#7ea6d6"></div>
<div class="a" style="left:312px;top:29px;width:32px;height:2px;background:#7ea6d6"></div>
<div class="a" style="left:348px;top:29px;width:38px;height:2px;background:#7ea6d6"></div>
<div class="a" style="left:390px;top:29px;width:31px;height:2px;background:#7ea6d6"></div>
<div class="a" style="left:348px;top:0px;width:38px;height:29px;background:#333"></div>
<svg style="left:125px;top:8px;" width="18" height="15" viewBox="0 0 18 15"><path d="M0 0H7L8.5 2H18V15H0Z" fill="#e8c95a"/><rect x="0" y="3" width="18" height="12" fill="#f5da7a"/><path d="M5 15V10H13V15" fill="none" stroke="#3a9ad4" stroke-width="2.2"/></svg>
<svg style="left:163px;top:6px;" width="19" height="18" viewBox="0 0 19 18"><circle cx="9.5" cy="9" r="8.5" fill="#f4f4f4"/><path d="M9.5 1.5A7.5 7.5 0 0 0 2 9 A7.5 7.5 0 0 0 6 15.5L8 12A4 4 0 0 1 9.5 5Z" fill="#e84a5a"/><path d="M9.5 16.5A7.5 7.5 0 0 0 17 9 A7.5 7.5 0 0 0 13 2.5L11 6A4 4 0 0 1 9.5 13Z" fill="#2f6fd0"/></svg>
<svg style="left:202px;top:6px;" width="19" height="19" viewBox="0 0 19 19"><circle cx="9.5" cy="9.5" r="9" fill="#db4437"/><path d="M9.5 9.5L1.7 5A9 9 0 0 0 5 17.3Z" fill="#0f9d58"/><path d="M9.5 9.5L5 17.3A9 9 0 0 0 18.5 9.5 L17.3 5Z" fill="#f4c20d"/><path d="M9.5 9.5L17.3 5A9 9 0 0 0 1.7 5Z" fill="#db4437"/><circle cx="9.5" cy="9.5" r="4.3" fill="#fff"/><circle cx="9.5" cy="9.5" r="3.3" fill="#4285f4"/></svg>
<svg style="left:241px;top:6px;" width="19" height="19" viewBox="0 0 19 19"><rect width="19" height="19" fill="#b81a1a"/><text x="9.5" y="15" font-size="14" font-weight="bold" font-style="italic" font-family="Liberation Sans" fill="#fff" text-anchor="middle">Fz</text></svg>
<svg style="left:279px;top:7px;" width="19" height="17" viewBox="0 0 19 17"><rect x="4" y="0" width="15" height="17" fill="#21a366"/><rect x="4" y="5.5" width="15" height="6" fill="#107c41"/><rect x="0" y="3" width="10" height="11" fill="#185c37"/><text x="5" y="12" font-size="8" font-weight="bold" font-family="Liberation Sans" fill="#fff" text-anchor="middle">x</text></svg>
<svg style="left:318px;top:6px;" width="15" height="18" viewBox="0 0 15 18"><rect width="15" height="18" fill="#f2f2f2"/><rect x="1.5" y="1.5" width="12" height="13" fill="#3a6fc9"/><path d="M2 14L13 6" stroke="#8a2a6a" stroke-width="1.5"/><path d="M1 16H14" stroke="#444" stroke-width="1"/></svg>
<svg style="left:357px;top:6px;" width="19" height="17" viewBox="0 0 19 17"><rect x="4" y="0" width="15" height="17" fill="#2b7cd3"/><rect x="4" y="5" width="15" height="4" fill="#41a5ee"/><rect x="4" y="11" width="15" height="6" fill="#185abd"/><rect x="0" y="3.5" width="10" height="10" fill="#185abd"/><text x="5" y="11.5" font-size="7.5" font-weight="bold" font-family="Liberation Sans" fill="#fff" text-anchor="middle">W</text></svg>
<svg style="left:396px;top:6px;" width="18" height="18" viewBox="0 0 18 18"><ellipse cx="9" cy="7" rx="8" ry="6" transform="rotate(-20 9 7)" fill="#e8d8dc"/><path d="M4 5Q9 9 14 4" fill="none" stroke="#a06070" stroke-width="1"/><circle cx="10" cy="15" r="2.2" fill="none" stroke="#3a8ad8" stroke-width="1.2"/><circle cx="15" cy="13" r="2.2" fill="none" stroke="#3a8ad8" stroke-width="1.2"/><path d="M10 8L10.5 13 M12 8L14 11" stroke="#3a8ad8" stroke-width="1"/></svg>
<svg style="left:1017px;top:12px;" width="11" height="7" viewBox="0 0 11 7"><path d="M0.5 6L5.5 1L10.5 6" fill="none" stroke="#ddd" stroke-width="1.1"/></svg>
<svg style="left:1034px;top:11px;" width="14" height="9" viewBox="0 0 14 9"><path d="M2 8.5A2.5 2.5 0 0 1 2.5 3.8A4.5 4.5 0 0 1 10.5 3A3 3 0 0 1 12 8.5Z" fill="#e6e6e6"/></svg>
<svg style="left:1053px;top:11px;" width="14" height="9" viewBox="0 0 14 9"><path d="M1.5 2.5H12V8.5H1.5Z M12 4.5H13.5V6.5H12 M1 0.5V2.5 M4 0.5V2.5" fill="none" stroke="#ddd" stroke-width="1"/><rect x="3" y="4" width="7.5" height="3" fill="#ddd"/></svg>
<svg style="left:1073px;top:10px;" width="12" height="11" viewBox="0 0 12 11"><path d="M1 10A9 9 0 0 1 11 1 M3.5 10A6.5 6.5 0 0 1 11 3.5 M6 10A4 4 0 0 1 11 6" fill="none" stroke="#ccc" stroke-width="1"/><circle cx="10" cy="9.5" r="1.2" fill="#eee"/></svg>
<svg style="left:1090px;top:12px;" width="13" height="8" viewBox="0 0 13 8"><path d="M0.5 2.5H2.5L5.5 0.3V7.7L2.5 5.5H0.5Z" fill="none" stroke="#ddd" stroke-width="0.9"/><path d="M7.5 1.5L12 6 M12 1.5L7.5 6" stroke="#ddd" stroke-width="1"/></svg>
<div class="t" style="left:1121.30px;top:5px;font-size:8.8px;color:#eee;">09:43</div>
<div class="t" style="left:1113.80px;top:19px;font-size:8.8px;color:#eee;">8-7-2020</div>
<svg style="left:1167px;top:9px;" width="22" height="20" viewBox="0 0 22 20"><path d="M0.5 0.5H13.5V10H5L2.5 12V10H0.5Z" fill="#f0f0f0"/><path d="M3 3H11 M3 5H11 M3 7H11" stroke="#999" stroke-width="0.7"/><circle cx="13" cy="13" r="6" fill="#202020" stroke="#888" stroke-width="0.8"/><text x="13" y="16" font-size="8.5" font-family="Liberation Sans" fill="#eee" text-anchor="middle">3</text></svg>
</div>
</body></html>
